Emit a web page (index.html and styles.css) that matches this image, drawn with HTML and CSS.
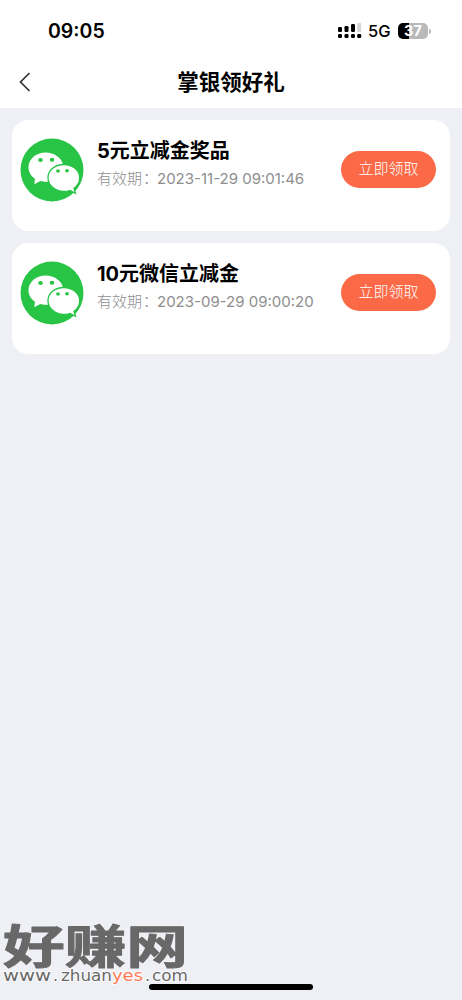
FILE: index.html
```html
<!DOCTYPE html>
<html lang="zh-CN">
<head>
<meta charset="utf-8">
<meta name="viewport" content="width=device-width">
<title>掌银领好礼</title>
<link rel="stylesheet" href="styles.css">
</head>
<body>
<svg class="defs" width="0" height="0" aria-hidden="true">
  <symbol id="wechat" viewBox="0 0 64 64">
    <circle cx="32" cy="32" r="31.5" fill="#28c445"/>
    <path fill="#fff" d="M25.500 14.500C16 14.500 8.500 21 8.500 29.200C8.500 34 11 38 15 40.800L14.300 46.200L20.300 43.100C22.500 43.800 26 44 28.500 43.700L43 27C42 20 34.500 14.500 25.500 14.500Z"/>
    <path fill="#fff" stroke="#28c445" stroke-width="1.300" d="M43.800 26.500C35 26.500 28 32.300 28 39.700S35 53.400 43.800 53.400C46 53.400 48 53.100 50 52.500L55.500 55.300L54 50.300C57.800 47.600 59.700 44 59.700 39.700C59.700 32.300 52.500 26.500 43.800 26.500Z"/>
    <g fill="#28c445"><ellipse cx="20.500" cy="22" rx="2.300" ry="2"/><ellipse cx="32" cy="21.700" rx="2.300" ry="2"/><ellipse cx="38" cy="33" rx="1.900" ry="1.700"/><ellipse cx="47" cy="32.700" rx="1.900" ry="1.700"/></g>
  </symbol>
</svg>
<div class="screen">
  <header class="top">
    <div class="status">
      <span class="time">09:05</span>
      <div class="indicators">
        <svg class="signal" width="24" height="16" viewBox="0 0 24 16">
          <g fill="#000"><rect y="4" width="4" height="5" rx="1.200"/><rect x="6.500" y="3" width="4" height="6" rx="1.200"/><rect x="13" y="1" width="4" height="8" rx="1.200"/><rect y="11" width="4" height="4" rx="1.200"/><rect x="6.500" y="11" width="4" height="4" rx="1.200"/><rect x="13" y="11" width="4" height="4" rx="1.200"/><rect x="19.200" y="11" width="4" height="4" rx="1.200"/></g>
          <rect x="19.200" width="4" height="9" rx="1.200" fill="#d5d5d5"/>
        </svg>
        <span class="network">5G</span>
        <span class="battery"><span class="level">37</span><span class="tip"></span></span>
      </div>
    </div>
    <nav class="nav">
      <svg class="back" width="12" height="20" viewBox="0 0 12 20"><path d="M10.500 1L1.500 10L10.500 19" fill="none" stroke="#333" stroke-width="1.700"/></svg>
      <h1>掌银领好礼</h1>
    </nav>
  </header>
  <main class="list">
    <section class="card">
      <svg class="logo"><use href="#wechat"/></svg>
      <div class="info"><h2>5元立减金奖品</h2><p><span class="label">有效期<span class="colon">：</span></span><span class="date">2023-11-29 09:01:46</span></p></div>
      <button class="claim">立即领取</button>
    </section>
    <section class="card">
      <svg class="logo"><use href="#wechat"/></svg>
      <div class="info"><h2>10元微信立减金</h2><p><span class="label">有效期<span class="colon">：</span></span><span class="date">2023-09-29 09:00:20</span></p></div>
      <button class="claim">立即领取</button>
    </section>
  </main>
  <svg class="watermark" width="200" height="80" viewBox="0 0 200 80">
    <text class="brand" x="3" y="43" textLength="185" lengthAdjust="spacingAndGlyphs">好赚网</text>
    <g class="site">
      <text x="3" y="61" textLength="48" lengthAdjust="spacingAndGlyphs">www</text>
      <text x="53" y="61">.</text>
      <text x="61" y="61" textLength="51" lengthAdjust="spacingAndGlyphs">zhuan</text>
      <text class="accent" x="112" y="61" textLength="31" lengthAdjust="spacingAndGlyphs">yes</text>
      <text x="145" y="61">.</text>
      <text x="152" y="61" textLength="36" lengthAdjust="spacingAndGlyphs">com</text>
    </g>
  </svg>
  <div class="home"></div>
</div>
</body>
</html>
```
FILE: styles.css
```css
* { box-sizing: border-box; }
body { margin: 0; font-family: Inter, "Noto Sans CJK SC", sans-serif; color: #000; }
h1, h2, p { margin: 0; }
.defs { position: absolute; }
.screen { position: relative; height: 1000px; overflow: hidden; background: #eff0f5; }
.top { height: 108px; background: #fff; }
.status { height: 56px; padding: 6px 31px 0 48px; display: flex; align-items: center; justify-content: space-between; }
.time { font-size: 19.500px; font-weight: 600; line-height: 24px; }
.indicators { display: flex; align-items: center; }
.signal { margin-right: 6px; }
.network { width: 30px; font-size: 16.500px; font-weight: 500; line-height: 20px; }
.battery { display: flex; align-items: center; gap: 1px; }
.level { width: 30px; height: 16px; border-radius: 5px; background: linear-gradient(90deg, #000 11px, #b9b9b9 11px); color: #fff; font-size: 14.500px; font-weight: 700; line-height: 16px; text-align: center; }
.tip { width: 2px; height: 5px; border-radius: 0 2px 2px 0; background: #b9b9b9; }
.nav { height: 52px; display: grid; grid-template-columns: 1fr auto 1fr; align-items: center; padding: 0 19px; }
.nav h1 { font-size: 21.500px; font-weight: 700; line-height: 30px; }
.list { display: flex; flex-direction: column; gap: 12px; padding: 12px; }
.card { display: flex; align-items: flex-start; height: 111px; padding: 18px 14px 0 8px; border-radius: 16px; background: #fff; }
.logo { width: 64px; height: 64px; flex: none; }
.info { flex: 1; margin-left: 13px; white-space: nowrap; }
.info h2 { font-size: 20px; font-weight: 700; line-height: 27px; }
.info p { display: flex; font-size: 15px; line-height: 28px; color: #8e8e8e; }
.label { width: 60px; font-family: "Noto Sans CJK SC", sans-serif; font-weight: 300; line-height: 26px; }
.colon { position: relative; top: -1px; left: 1px; }
.date { letter-spacing: 0; }
.claim { width: 95px; height: 37px; margin-top: 13px; padding: 0 0 4px; border: 0; border-radius: 19px; background: #fc6947; color: #fff; font: 300 15px "Noto Sans CJK SC", sans-serif; }
.watermark { position: absolute; left: 0; top: 920px; }
.brand { font: 700 46px "Noto Sans CJK SC", sans-serif; fill: #686868; stroke: #686868; stroke-width: 1px; stroke-linejoin: round; }
.site { font: 400 16px "DejaVu Sans", sans-serif; fill: #686868; stroke: #fff; stroke-width: 1.500px; paint-order: stroke; }
.site .accent { fill: #ff7952; }
.home { position: absolute; left: 149px; top: 984px; width: 164px; height: 6px; border-radius: 3px; background: #000; }
```
